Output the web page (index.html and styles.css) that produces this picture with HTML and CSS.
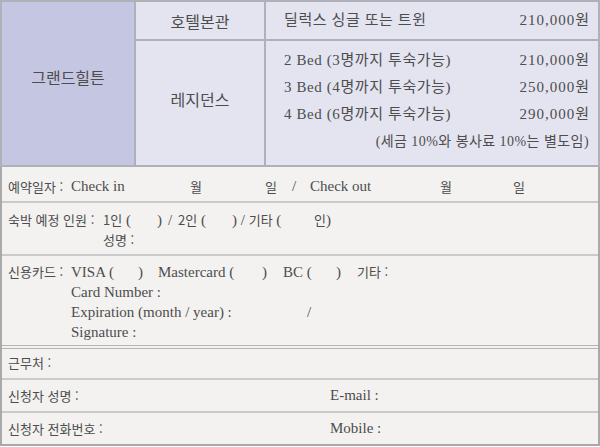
FILE: index.html
```html
<!DOCTYPE html>
<html lang="ko">
<head>
<meta charset="utf-8">
<link rel="stylesheet" href="styles.css">
</head>
<body>
<div class="page">
  <table class="rates">
    <tr class="r1">
      <td class="hotel" rowspan="2"><span class="lift">그랜드힐튼</span></td>
      <td class="bldg">호텔본관</td>
      <td class="rooms">
        <div class="line"><span class="desc">딜럭스 싱글 또는 트윈</span><span class="price">210,000원</span></div>
      </td>
    </tr>
    <tr class="r2">
      <td class="bldg"><span class="lift2">레지던스</span></td>
      <td class="rooms multi">
        <div class="line"><span class="desc">2 Bed (3명까지 투숙가능)</span><span class="price">210,000원</span></div>
        <div class="line"><span class="desc">3 Bed (4명까지 투숙가능)</span><span class="price">250,000원</span></div>
        <div class="line"><span class="desc">4 Bed (6명까지 투숙가능)</span><span class="price">290,000원</span></div>
        <div class="note">(세금 10%와 봉사료 10%는 별도임)</div>
      </td>
    </tr>
  </table>
  <div class="form">
    <div class="row date">
      <span class="k w63">예약일자 :</span>
      <span class="w119">Check in</span>
      <span class="k w75">월</span>
      <span class="k w27">일</span>
      <span class="w18">/</span>
      <span class="w130">Check out</span>
      <span class="k w73">월</span>
      <span class="k">일</span>
    </div>
    <div class="row guests">
      <div class="g-line">
        <span class="k w95">숙박 예정 인원 :</span>
        <span class="w54"><span class="k">1인</span> (</span>
        <span class="w11">)</span>
        <span class="w10">/</span>
        <span class="w54"><span class="k">2인</span> (</span>
        <span class="w82">) / <span class="k">기타</span> (</span>
        <span class="k">인</span><span>)</span>
      </div>
      <div class="g-name"><span class="k">성명 :</span></div>
    </div>
    <div class="row card">
      <span class="k w63">신용카드 :</span>
      <div class="card-lines">
        <div class="c-line"><span class="w67">VISA (</span><span class="w20">)</span><span class="w104">Mastercard (</span><span class="w21">)</span><span class="w53">BC (</span><span class="w21">)</span><span class="k">기타 :</span></div>
        <div class="c-line">Card Number :</div>
        <div class="c-line"><span class="w236">Expiration (month / year) :</span><span>/</span></div>
        <div class="c-line">Signature :</div>
      </div>
    </div>
    <div class="row work"><span class="k">근무처 :</span></div>
    <div class="row pair"><span class="k w322">신청자 성명 :</span><span>E-mail :</span></div>
    <div class="row pair last"><span class="k w322">신청자 전화번호 :</span><span>Mobile :</span></div>
  </div>
</div>
</body>
</html>
```
FILE: styles.css
```css
html, body {
  margin: 0;
  padding: 0;
  background: #ffffff;
}
.page {
  width: 600px;
  font-family: "Liberation Serif", "Noto Sans CJK KR", serif;
  font-size: 15px;
  color: #4d4d4d;
}
.rates {
  border-collapse: collapse;
  width: 600px;
  table-layout: fixed;
}
.rates td {
  border: 2px solid #b0b0b8;
  padding: 0;
  background: #e4e4f1;
  vertical-align: middle;
}
.rates td.hotel {
  width: 132px;
  background: #c5c6e2;
  text-align: center;
  font-family: "Noto Sans CJK KR", sans-serif;
  font-size: 16px;
}
.lift { display: inline-block; margin-bottom: 14px; }
.lift2 { display: inline-block; margin-bottom: 9px; }
.rates td.bldg {
  width: 128px;
  text-align: center;
  font-family: "Noto Sans CJK KR", sans-serif;
  font-size: 16px;
}
.r1 td { height: 37px; }
.r2 td { height: 118px; }
.rooms {
  padding: 0 9px 0 18px !important;
}
.line {
  display: flex;
  justify-content: space-between;
  height: 27px;
  line-height: 27px;
}
.desc { letter-spacing: 0.6px; }
.price { letter-spacing: 1px; margin-right: -1px; }
.r1 .line { height: 37px; line-height: 37px; }
.multi { vertical-align: top !important; padding-top: 6px !important; }
.note {
  text-align: right;
  line-height: 27px;
  height: 27px;
  font-size: 14px;
  letter-spacing: 0.45px;
}
.form {
  background: #f3f2f0;
  border-left: 2px solid #a9a9a9;
  border-right: 2px solid #a9a9a9;
  border-bottom: 2px solid #a9a9a9;
}
.row {
  border-bottom: 2px solid #cbcbcb;
  padding-left: 6px;
  box-sizing: border-box;
}
.k {
  font-family: "Noto Sans CJK KR", sans-serif;
  font-size: 13px;
}
.w10 { width: 10px; }
.w11 { width: 11px; }
.w18 { width: 18px; }
.w20 { width: 20px; }
.w21 { width: 21px; }
.w27 { width: 27px; }
.w53 { width: 53px; }
.w54 { width: 54px; }
.w63 { width: 63px; }
.w67 { width: 67px; }
.w73 { width: 73px; }
.w75 { width: 75px; }
.w82 { width: 82px; }
.w95 { width: 95px; }
.w104 { width: 104px; }
.w119 { width: 119px; }
.w130 { width: 130px; }
.w236 { width: 236px; }
.w322 { width: 322px; }
.date, .g-line, .c-line, .pair, .card { display: flex; }
.date > span, .g-line > span, .c-line > span, .card > span, .pair > span { flex: none; }
.date {
  height: 36px;
  align-items: center;
  padding-top: 5px;
}
.guests {
  height: 53px;
  padding-top: 7px;
  line-height: 19px;
}
.g-line { align-items: baseline; }
.g-name { padding-left: 95px; }
.card {
  height: 93px;
  padding-top: 6px;
  line-height: 20px;
  border-bottom: 4px double #b5b5b5;
}
.card-lines { display: flex; flex-direction: column; }
.c-line { align-items: baseline; }
.work {
  height: 31px;
  line-height: 27px;
}
.pair {
  height: 33px;
  align-items: center;
}
.last { border-bottom: none; height: 31px; }
```
